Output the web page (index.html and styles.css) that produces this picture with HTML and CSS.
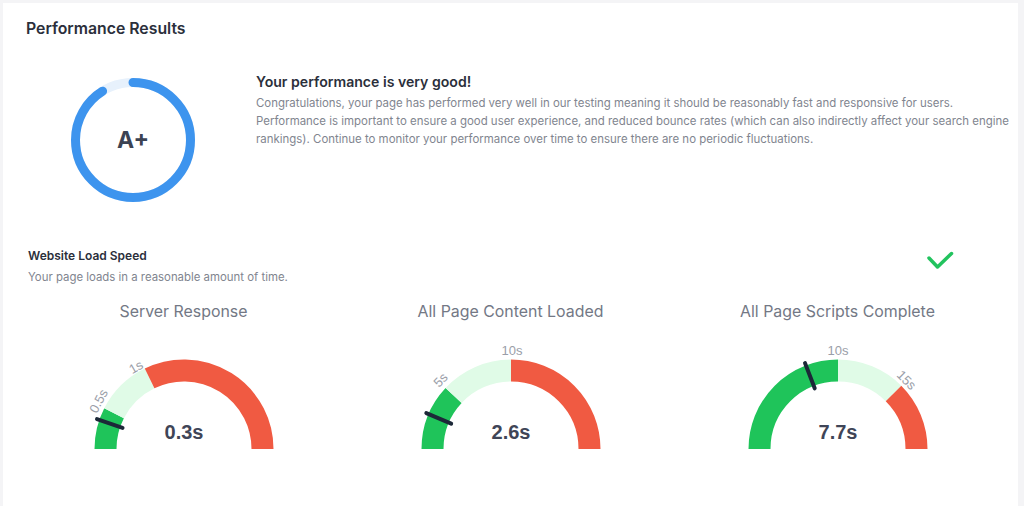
FILE: index.html
```html
<!DOCTYPE html>
<html lang="en">
<head>
  <meta charset="UTF-8">
  <meta name="viewport" content="width=device-width, initial-scale=1.0">
  <title>Performance Results</title>
  <link rel="stylesheet" href="styles.css">
</head>
<body>
  <div class="card">
    <h2 class="card-title">Performance Results</h2>

    <!-- Grade summary -->
    <div class="summary">
      <div class="grade">
        <svg width="130" height="130" viewBox="0 0 130 130">
          <circle cx="65" cy="65" r="57.5" fill="none" stroke="#e7f1fc" stroke-width="9"/>
          <circle cx="65" cy="65" r="57.5" fill="none" stroke="#3d94ee" stroke-width="9"
                  stroke-linecap="round" stroke-dasharray="328.7 400" transform="rotate(-90 65 65)"/>
        </svg>
        <span class="grade-label">A+</span>
      </div>
      <div class="summary-text">
        <h3>Your performance is very good!</h3>
        <p>Congratulations, your page has performed very well in our testing meaning it should be reasonably fast and responsive for users. Performance is important to ensure a good user experience, and reduced bounce rates (which can also indirectly affect your search engine rankings). Continue to monitor your performance over time to ensure there are no periodic fluctuations.</p>
      </div>
    </div>

    <!-- Load speed -->
    <div class="speed-head">
      <div>
        <h4>Website Load Speed</h4>
        <p>Your page loads in a reasonable amount of time.</p>
      </div>
      <svg class="check" width="28" height="20" viewBox="0 0 28 20">
        <path d="M3 7 L11.5 16 L25.5 2.5" fill="none" stroke="#22c35e" stroke-width="3.5" stroke-linecap="round" stroke-linejoin="round"/>
      </svg>
    </div>

    <div class="gauges">
      <div class="gauge">
        <div class="gauge-title">Server Response</div>
        <svg width="200" height="110" viewBox="0 0 200 110">
          <path d="M21.5 105 A78.5 78.5 0 0 1 30.06 69.36" class="seg-good"/>
          <path d="M30.06 69.36 A78.5 78.5 0 0 1 65.59 34.44" class="seg-mid"/>
          <path d="M65.59 34.44 A78.5 78.5 0 0 1 178.5 105" class="seg-bad"/>
          <line x1="38.54" y1="83.84" x2="13.01" y2="75.05" class="needle"/>
          <text x="14.5" y="57" class="tick" transform="rotate(-62 14.5 57)">0.5s</text>
          <text x="52" y="23" class="tick" transform="rotate(-30 52 23)">1s</text>
          <text x="100" y="88" class="value">0.3s</text>
        </svg>
      </div>
      <div class="gauge">
        <div class="gauge-title">All Page Content Loaded</div>
        <svg width="200" height="110" viewBox="0 0 200 110">
          <path d="M21.5 105 A78.5 78.5 0 0 1 42.59 51.46" class="seg-good"/>
          <path d="M42.59 51.46 A78.5 78.5 0 0 1 100 26.5" class="seg-mid"/>
          <path d="M100 26.5 A78.5 78.5 0 0 1 178.5 105" class="seg-bad"/>
          <line x1="40.17" y1="79.6" x2="15.31" y2="69.06" class="needle"/>
          <text x="29.5" y="36" class="tick" transform="rotate(-46 29.5 36)">5s</text>
          <text x="101" y="6" class="tick">10s</text>
          <text x="100" y="88" class="value">2.6s</text>
        </svg>
      </div>
      <div class="gauge">
        <div class="gauge-title">All Page Scripts Complete</div>
        <svg width="200" height="110" viewBox="0 0 200 110">
          <path d="M21.5 105 A78.5 78.5 0 0 1 100 26.5" class="seg-good"/>
          <path d="M100 26.5 A78.5 78.5 0 0 1 155.51 49.49" class="seg-mid"/>
          <path d="M155.51 49.49 A78.5 78.5 0 0 1 178.5 105" class="seg-bad"/>
          <line x1="76.7" y1="44.32" x2="67.03" y2="19.11" class="needle"/>
          <text x="100" y="6" class="tick">10s</text>
          <text x="168.5" y="36" class="tick" transform="rotate(45 168.5 36)">15s</text>
          <text x="100" y="88" class="value">7.7s</text>
        </svg>
      </div>
    </div>
  </div>
</body>
</html>
```

FILE: styles.css
```css
/* Colores */
:root {
  --ink: #2b2f3b;
  --muted: #81858f;
  --good: #1fc45a;
  --mid: #e0fbe7;
  --bad: #f05a42;
}

* { margin: 0; padding: 0; box-sizing: border-box; }
body {
  font-family: 'Inter', 'Liberation Sans', sans-serif;
  background: #f4f4f6;
  color: var(--ink);
}

/* Tarjeta */
.card {
  background: #fff;
  margin: 3px 6px 0 3px;
  padding: 16px 17px 60px;
  min-height: 520px;
}
.card-title {
  margin-left: 6px;
  font-size: 15.8px;
  line-height: 20px;
  font-weight: 600;
}

/* Resumen */
.summary {
  display: flex;
  align-items: flex-start;
  margin-top: 36px;
  margin-right: -12px;
}
.grade {
  position: relative;
  width: 130px;
  height: 130px;
  margin-left: 48px;
  flex-shrink: 0;
}
.grade svg { display: block; }
.grade-label {
  position: absolute;
  inset: 0;
  display: flex;
  align-items: center;
  justify-content: center;
  font-size: 23px;
  font-weight: 700;
  color: #3c4353;
}
.summary-text { margin-left: 58px; }
.summary-text h3 {
  font-size: 14.1px;
  line-height: 14px;
  font-weight: 600;
}
.summary-text p {
  margin-top: 5px;
  font-size: 11.45px;
  line-height: 18px;
  color: var(--muted);
}

/* Velocidad */
.speed-head {
  display: flex;
  justify-content: space-between;
  align-items: flex-start;
  margin-top: 43px;
  padding: 0 47px 0 8px;
}
.speed-head h4 {
  font-size: 12px;
  line-height: 16px;
  font-weight: 600;
}
.speed-head p {
  margin-top: 5px;
  font-size: 11.4px;
  line-height: 16px;
  color: var(--muted);
}
.check { margin-top: 3px; }

/* Medidores */
.gauges {
  display: grid;
  grid-template-columns: repeat(3, 1fr);
  margin-top: 16px;
}
.gauge { text-align: center; }
.gauge-title {
  font-size: 15.9px;
  line-height: 20px;
  padding-top: 1px;
  color: #737885;
}
.gauge svg { display: block; margin: 22px auto 0; }
.seg-good, .seg-mid, .seg-bad { fill: none; stroke-width: 22; }
.seg-good { stroke: var(--good); }
.seg-mid { stroke: var(--mid); }
.seg-bad { stroke: var(--bad); }
.needle { stroke: #1c2838; stroke-width: 4; stroke-linecap: round; }
.tick {
  font-family: 'Liberation Sans', sans-serif;
  font-size: 13px;
  fill: #9a9ea8;
  text-anchor: middle;
  dominant-baseline: central;
}
.value {
  font-family: 'Liberation Sans', sans-serif;
  font-size: 20px;
  font-weight: 700;
  fill: #3f4557;
  text-anchor: middle;
  dominant-baseline: central;
}
```
